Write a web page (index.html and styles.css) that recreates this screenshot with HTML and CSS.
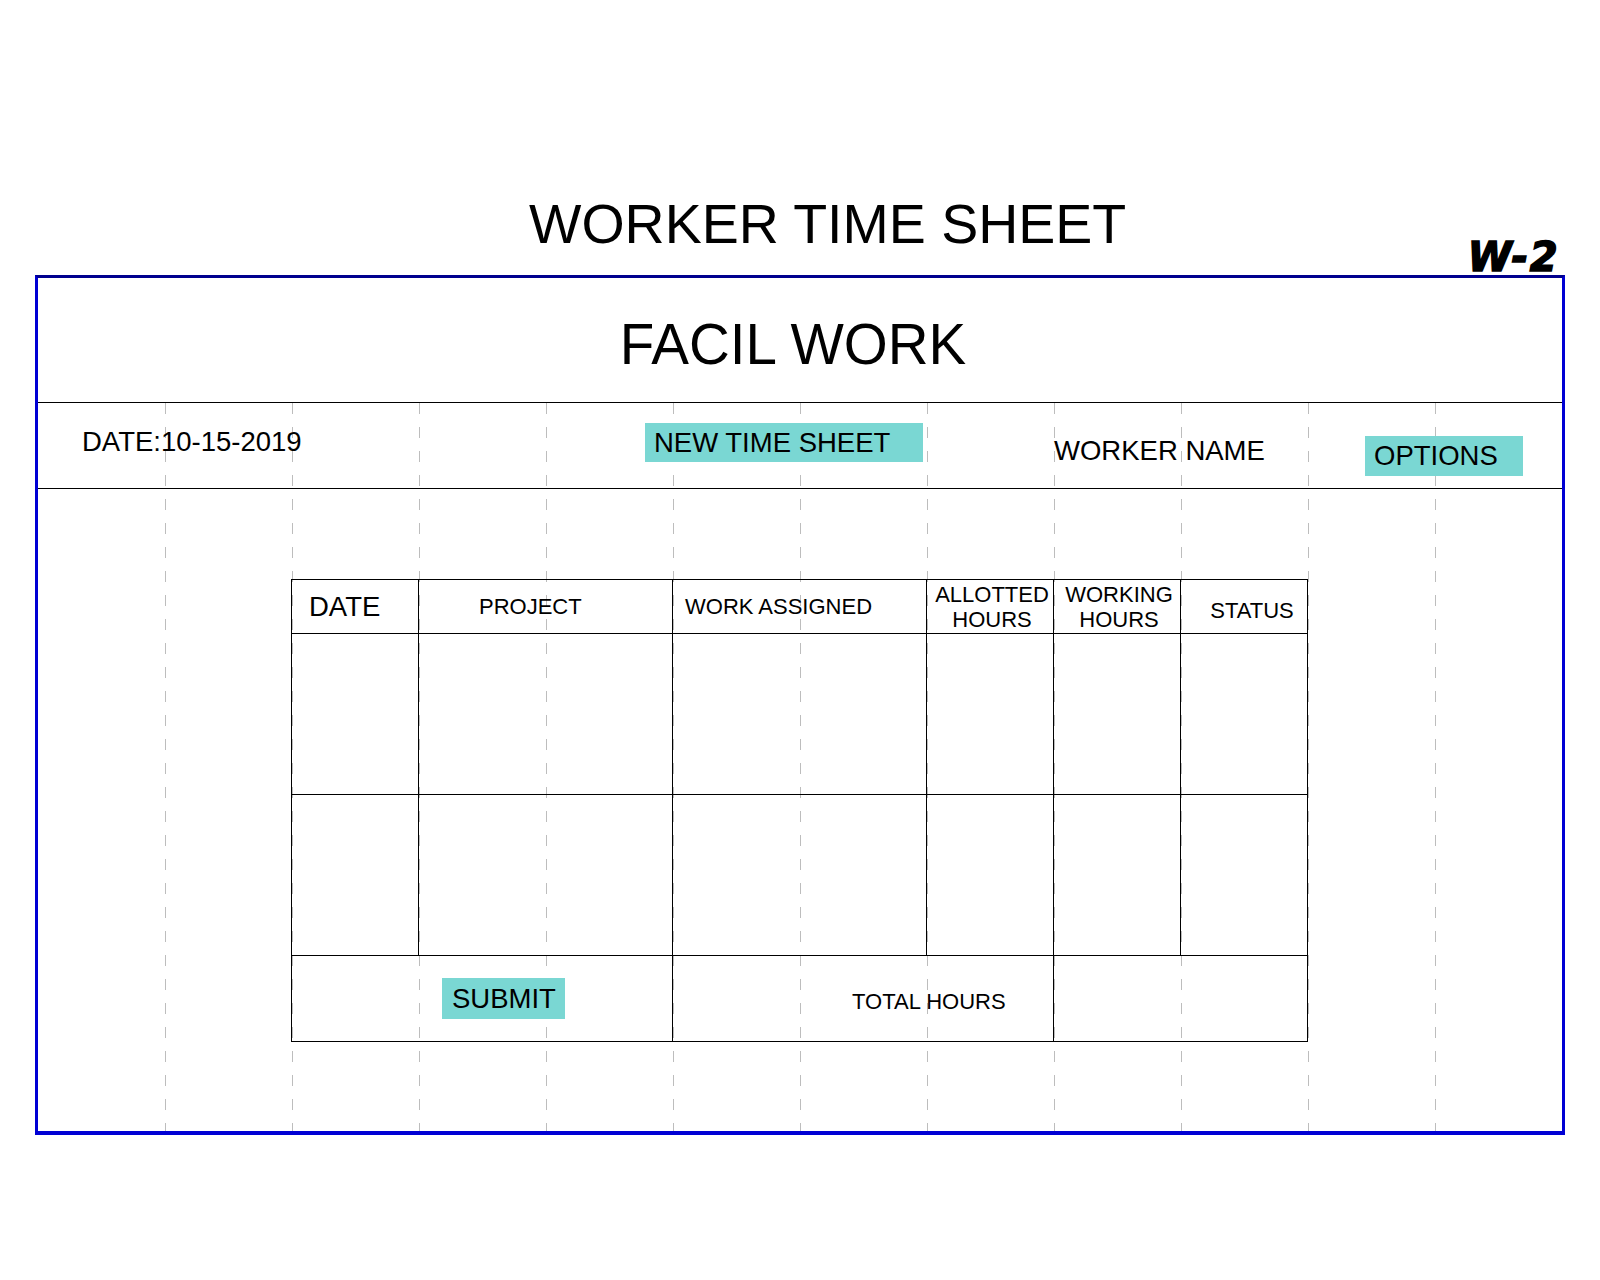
FILE: index.html
```html
<!DOCTYPE html>
<html lang="en">
<head>
  <meta charset="UTF-8" />
  <meta name="viewport" content="width=device-width, initial-scale=1" />
  <title>Facil Work - Worker Time Sheet</title>
  <link rel="stylesheet" href="styles.css">
</head>
<body>
<div class="page">
  <header class="sheet-head">
    <h1 class="title">WORKER TIME SHEET</h1>
    <span class="code">W-2</span>
  </header>

  <section class="sheet">
    <div class="brand">FACIL WORK</div>

    <div class="sheet-body">
      <div class="toolbar">
        <div class="today">DATE:10-15-2019</div>
        <button class="btn btn-new">NEW TIME SHEET</button>
        <div class="worker">WORKER NAME</div>
        <button class="btn btn-options">OPTIONS</button>
      </div>

      <table class="timesheet">
        <colgroup>
          <col style="width:127px"><col style="width:254px"><col style="width:254px">
          <col style="width:127px"><col style="width:127px"><col style="width:127px">
        </colgroup>
        <thead>
          <tr>
            <th class="th-date">DATE</th>
            <th class="th-project">PROJECT</th>
            <th class="th-work">WORK ASSIGNED</th>
            <th class="th-hours">ALLOTTED<br>HOURS</th>
            <th class="th-hours">WORKING<br>HOURS</th>
            <th class="th-status">STATUS</th>
          </tr>
        </thead>
        <tbody>
          <tr><td></td><td></td><td></td><td></td><td></td><td></td></tr>
          <tr><td></td><td></td><td></td><td></td><td></td><td></td></tr>
        </tbody>
        <tfoot>
          <tr>
            <td colspan="2" class="submit-cell"><button class="btn btn-submit">SUBMIT</button></td>
            <td colspan="2" class="total-cell">TOTAL HOURS</td>
            <td colspan="2"></td>
          </tr>
        </tfoot>
      </table>
    </div>
  </section>
</div>
</body>
</html>
```

FILE: styles.css
```css
* { margin: 0; padding: 0; box-sizing: border-box; font-family: 'Liberation Sans', Arial, sans-serif; }
body { background: #fff; color: #000; }
.page { width: 1530px; margin-left: 35px; padding-top: 192px; }

/* page heading */
.sheet-head { display: flex; align-items: flex-end; }
.title { font-size: 55.5px; line-height: 64px; font-weight: 400; margin: 0 0 19px 494px; }
.code {
  margin: 0 6px -2px auto; font-family: 'DejaVu Sans', sans-serif; font-size: 40px; line-height: 40px;
  font-weight: 700; font-style: italic; letter-spacing: 1.5px; -webkit-text-stroke: 1.6px #000;
}

/* blue frame */
.sheet { border: 3px solid #0000d4; border-top-color: #00008e; border-bottom-width: 4px; }
.brand {
  height: 125px; padding: 8px 14px 0 0; line-height: 117px; font-size: 56.5px;
  text-align: center; border-bottom: 1px solid #000;
}

/* dashed 12 column guide behind the body */
.sheet-body {
  padding-bottom: 89px; background-color: #fff;
  background-image:
    linear-gradient(to right, #fff 1px, transparent 1px),
    repeating-linear-gradient(to bottom, transparent 0 11px, #fff 11px 24px),
    linear-gradient(to right, #bdbdbd 1px, transparent 1px);
  background-size: 100% 100%, 100% 100%, calc(100% / 12) 100%;
  background-repeat: no-repeat, no-repeat, repeat-x;
}

.toolbar { display: flex; align-items: flex-start; height: 86px; border-bottom: 1px solid #000; font-size: 27.5px; }
.today { width: 607px; padding-left: 44px; margin-top: 19px; line-height: 40px; }
.worker { width: 311px; margin: 28px 0 0 131px; line-height: 40px; }

.btn {
  background: #7ad7d3; border: none; color: #000; font-size: 27.5px; text-align: left;
  padding-left: 9px; cursor: pointer;
}
.btn-new { width: 278px; height: 39px; line-height: 39px; margin-top: 20px; }
.btn-options { width: 158px; height: 40px; line-height: 40px; margin-top: 33px; }
.btn-submit { width: 123px; height: 41px; line-height: 41px; padding-left: 10px; }

/* time sheet table */
.timesheet { width: 1016px; margin: 90px 0 0 253px; border-collapse: collapse; table-layout: fixed; }
.timesheet th, .timesheet td { border: 1px solid #000; padding: 0; vertical-align: middle; }
.timesheet th { height: 54px; font-weight: 400; font-size: 22px; line-height: 25px; text-align: left; }
.timesheet tbody td { height: 161px; }
.timesheet tfoot td { height: 86px; }
.th-date { font-size: 27.5px !important; padding-left: 17px !important; }
.th-project { padding-left: 60px !important; }
.th-work { padding-left: 12px !important; }
.th-hours { text-align: center !important; padding-left: 4px !important; }
.th-status { text-align: center !important; padding: 8px 0 0 16px !important; }
.submit-cell { padding-left: 150px !important; }
.total-cell { font-size: 22px; padding: 6px 0 0 179px !important; }
```
